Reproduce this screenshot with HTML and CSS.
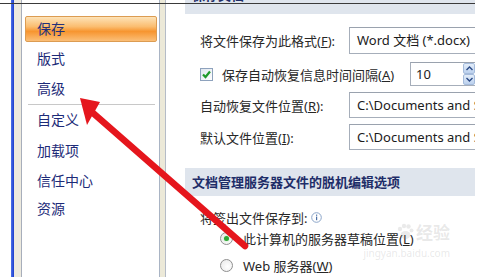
FILE: index.html
```html
<!DOCTYPE html>
<html lang="zh-CN">
<head>
    <meta charset="UTF-8">
    <title>Word 选项 - 保存</title>
    <link rel="stylesheet" href="styles.css">
</head>
<body>

    <div class="frame">
        <div class="edge"></div>
        <div class="rail"></div>
        <div class="rail-pad"></div>

        <!-- left navigation -->
        <nav class="sidebar">
            <div class="nav-item cut">常规</div>
            <div class="nav-item active">保存</div>
            <div class="nav-item after-active">版式</div>
            <div class="nav-item">高级</div>
            <div class="nav-sep"></div>
            <div class="nav-item">自定义</div>
            <div class="nav-item gap1">加载项</div>
            <div class="nav-item">信任中心</div>
            <div class="nav-item tight">资源</div>
        </nav>

        <div class="gutter"></div>

        <!-- options panel -->
        <main class="content">
            <div class="group-head top"><span>保存文档</span></div>

            <div class="row r-format">
                <span class="label">将文件保存为此格式(<u>F</u>):</span>
                <div class="field">Word 文档 (*.docx)</div>
            </div>

            <div class="row r-auto">
                <span class="checkbox">
                    <svg width="11" height="11" viewBox="0 0 11 11"><path d="M2 5.5 L4.5 8 L9 2.5" fill="none" stroke="#1f9a2a" stroke-width="2.2"/></svg>
                </span>
                <span class="check-label">保存自动恢复信息时间间隔(<u>A</u>)</span>
                <div class="field spin">
                    <span>10</span>
                    <span class="spinner">
                        <span class="spin-btn"><svg width="7" height="5" viewBox="0 0 7 5"><path d="M0.5 4 L3.5 1 L6.5 4" fill="none" stroke="#2b4a86" stroke-width="1.4"/></svg></span>
                        <span class="spin-btn"><svg width="7" height="5" viewBox="0 0 7 5"><path d="M0.5 1 L3.5 4 L6.5 1" fill="none" stroke="#2b4a86" stroke-width="1.4"/></svg></span>
                    </span>
                </div>
            </div>

            <div class="row r-path">
                <span class="label">自动恢复文件位置(<u>R</u>):</span>
                <div class="field tall">C:\Documents and Settings</div>
            </div>

            <div class="row r-path">
                <span class="label">默认文件位置(<u>I</u>):</span>
                <div class="field tall">C:\Documents and Settings</div>
            </div>

            <div class="group-head">文档管理服务器文件的脱机编辑选项</div>

            <div class="row r-info">
                <span>将签出文件保存到:</span>
                <svg class="info" width="11" height="11" viewBox="0 0 11 11">
                    <circle cx="5.5" cy="5.5" r="4.8" fill="#fff" stroke="#8aa4c8"/>
                    <rect x="5" y="4.6" width="1.2" height="3.6" fill="#4a6fa5"/>
                    <rect x="5" y="2.6" width="1.2" height="1.2" fill="#4a6fa5"/>
                </svg>
            </div>

            <div class="row radio-row r-radio1">
                <span class="radio on"><span class="dot"></span></span>
                <span>此计算机的服务器草稿位置(<u>L</u>)</span>
            </div>

            <div class="row radio-row r-radio2">
                <span class="radio"></span>
                <span>Web 服务器(<u>W</u>)</span>
            </div>
        </main>
    </div>

    <div class="topline"></div>

    <!-- red annotation arrow -->
    <svg class="arrow" width="479" height="277" viewBox="0 0 479 277">
        <line x1="93" y1="113" x2="245" y2="246" stroke="#e5161d" stroke-width="6.5" stroke-linecap="round"/>
        <polygon points="80,98 100,102 87,125" fill="#e5161d"/>
    </svg>

    <div class="watermark">
        <div class="wm-top">
            <svg width="18" height="17" viewBox="0 0 18 17">
                <circle cx="4" cy="6" r="2.2"/>
                <circle cx="8" cy="3" r="2.2"/>
                <circle cx="12.5" cy="3.5" r="2.2"/>
                <circle cx="15.5" cy="7.5" r="2"/>
                <ellipse cx="9.5" cy="12" rx="5" ry="4"/>
            </svg>
            <span>经验</span>
        </div>
        <div class="wm-url">jingyan.baidu.com</div>
    </div>

</body>
</html>
```

FILE: styles.css
```css
/* page is a cropped part of the Word options dialog */
body {
    margin: 0;
    width: 479px;
    height: 277px;
    overflow: hidden;
    position: relative;
    background-color: #fff;
    font-family: "Noto Sans", "Noto Sans CJK SC", sans-serif;
}

.frame {
    display: flex;
    height: 277px;
}

/* left window edge */
.edge {
    width: 11px;
}

.rail {
    width: 3px;
    background: linear-gradient(to right, #4d72ea, #1b3ccb);
}

.rail-pad {
    width: 7px;
    background-color: #ece9de;
    border-right: 1px solid #a7aebb;
}

/* navigation list */
.sidebar {
    width: 137px;
    background-color: #fff;
    border-right: 1px solid #a9b4c4;
    display: flex;
    flex-direction: column;
}

.nav-item {
    height: 30px;
    line-height: 30px;
    margin: 0 2px 0 3px;
    padding-left: 12px;
    font-size: 14px;
    color: #1d2b78;
    flex: none;
}

.nav-item.cut {
    margin-top: -22px;
}

.nav-item.active {
    height: 26px;
    line-height: 24px;
    box-sizing: border-box;
    margin-top: 8px;
    padding-left: 11px;
    border: 1px solid #dc9c52;
    border-radius: 2px;
    color: #24307a;
    background: linear-gradient(#fde3b8, #fbbd70 40%, #f7952f 60%, #fbbf78);
}

.nav-item.after-active {
    margin-top: 2px;
}

.nav-item.gap1 {
    margin-top: 1px;
}

.nav-item.tight {
    margin-top: -2px;
}

.nav-sep {
    height: 1px;
    background-color: #c8c8c8;
    margin: 0 4px 0 6px;
    flex: none;
}

.gutter {
    width: 5px;
    background-color: #ece9d8;
    border-right: 1px solid #b5bcc7;
}

/* options area */
.content {
    width: 309px;
    overflow: hidden;
    display: flex;
    flex-direction: column;
}

.group-head {
    flex: none;
    margin: 18px 0 0 19px;
    height: 28px;
    line-height: 28px;
    padding-left: 7px;
    background-color: #dfe5ed;
    color: #1e2d68;
    font-weight: bold;
    font-size: 13px;
    white-space: nowrap;
}

.group-head.top {
    margin-top: 0;
    height: 14px;
    overflow: hidden;
}

.group-head.top span {
    display: block;
    margin-top: -15px;
    line-height: 20px;
}

.row {
    flex: none;
    display: flex;
    align-items: center;
    padding-left: 34px;
    font-size: 13px;
    color: #272727;
    white-space: nowrap;
}

.row .label {
    width: 149px;
    flex: none;
}

.r-format {
    margin-top: 13px;
    height: 27px;
}

.r-auto {
    margin-top: 8px;
    height: 24px;
}

.r-path {
    margin-top: 6px;
    height: 26px;
}

.r-info {
    margin-top: 11px;
    height: 20px;
}

.radio-row {
    padding-left: 54px;
    height: 20px;
}

.r-radio1 {
    margin-top: 1px;
}

.r-radio2 {
    margin-top: 7px;
}

/* text boxes */
.field {
    flex: none;
    box-sizing: border-box;
    width: 150px;
    height: 27px;
    line-height: 25px;
    padding-left: 7px;
    border: 1px solid #a6aeba;
    border-top-color: #9aa2ae;
    background-color: #fff;
    font-size: 13px;
    color: #1b1b1b;
    overflow: hidden;
}

.field.tall {
    height: 26px;
    line-height: 24px;
}

.field.spin {
    width: 66px;
    height: 24px;
    line-height: 22px;
    padding-left: 5px;
    display: flex;
    justify-content: space-between;
}

.spinner {
    display: flex;
    flex-direction: column;
    width: 12px;
}

.spin-btn {
    flex: 1;
    display: flex;
    align-items: center;
    justify-content: center;
    background: linear-gradient(#e3edf9, #bcd1ee);
    border: 1px solid #a5bbdb;
    border-radius: 2px;
}

.checkbox {
    box-sizing: border-box;
    width: 13px;
    height: 13px;
    margin-right: 9px;
    border: 1px solid #8ea2bd;
    background: linear-gradient(135deg, #dfe6ee, #fff);
    display: flex;
    align-items: center;
    justify-content: center;
    flex: none;
}

.check-label {
    width: 188px;
    flex: none;
}

.info {
    margin-left: 4px;
}

.radio {
    box-sizing: border-box;
    width: 13px;
    height: 13px;
    margin-right: 10px;
    border: 1px solid #8f8f8f;
    border-radius: 50%;
    background: radial-gradient(circle at 60% 60%, #fff, #e6e6e6);
    display: flex;
    align-items: center;
    justify-content: center;
    flex: none;
}

.radio .dot {
    width: 5px;
    height: 5px;
    border-radius: 50%;
    background-color: #2ea836;
    box-shadow: 0 0 2px #9ee39f;
}

/* overlays */
.topline {
    position: absolute;
    left: 0;
    top: 3px;
    width: 475px;
    height: 1px;
    background-color: #3a3a3a;
}

.arrow {
    position: absolute;
    left: 0;
    top: 0;
    pointer-events: none;
}

.watermark {
    position: absolute;
    left: 360px;
    top: 219px;
    width: 90px;
    color: rgba(140, 140, 140, 0.2);
    pointer-events: none;
}

.wm-top {
    display: flex;
    align-items: center;
    justify-content: flex-end;
    gap: 2px;
    font-size: 17px;
    font-weight: bold;
}

.wm-top svg {
    fill: rgba(140, 140, 140, 0.18);
}

.wm-url {
    font-size: 10px;
    text-align: right;
    margin-top: 2px;
}
```
